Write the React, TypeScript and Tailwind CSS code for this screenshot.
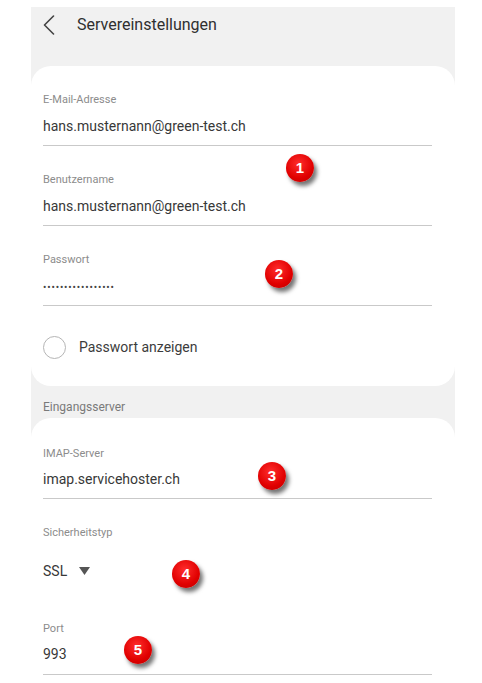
import React from "react";

const font = { fontFamily: "Roboto, 'Noto Sans', Arial, sans-serif" };

function Field({ label, value, className = "" }: { label: string; value: React.ReactNode; className?: string }) {
  return (
    <div className={className}>
      <div className="h-[14px] text-[11px] leading-[14px] text-[#8c8c8c]">{label}</div>
      <div className="mt-[8px] h-[22px] text-[14px] leading-[22px] text-[#383838]">{value}</div>
      <div className="mt-[8px] h-px bg-[#c9c9c9]" />
    </div>
  );
}

function Badge({ n, className }: { n: number; className: string }) {
  return (
    <div
      className={`absolute flex h-[28px] w-[28px] items-center justify-center rounded-full bg-[radial-gradient(circle_at_45%_35%,#ff2d2d,#e00000_60%,#b80000)] text-[15px] font-bold text-white shadow-[3px_4px_4px_rgba(0,0,0,0.55)] ${className}`}
      style={{ fontFamily: "Arial, 'Liberation Sans', sans-serif" }}
    >
      {n}
    </div>
  );
}

export default function App() {
  return (
    <div className="relative h-[683px] w-[482px] overflow-hidden bg-white" style={font}>
      <div className="ml-[31px] mt-[7px] flex h-[676px] w-[424px] flex-col bg-[#f1f1f1]">
        {/* header */}
        <div className="h-[59px]">
          <div className="flex h-[36px] items-center pl-3">
            <svg width="12" height="20" viewBox="0 0 12 20" className="mt-[-1px]">
              <path d="M10.5 1 L1.5 10 L10.5 19" fill="none" stroke="#444" strokeWidth="1.6" strokeLinecap="round" strokeLinejoin="round" />
            </svg>
            <span className="ml-[22px] text-[16px] text-[#2f2f2f]">Servereinstellungen</span>
          </div>
        </div>

        {/* account card */}
        <div className="h-[320px] rounded-[20px] bg-white pl-3 pr-[23px] pt-[27px]">
          <Field label="E-Mail-Adresse" value="hans.musternann@green-test.ch" />
          <Field className="mt-[27px]" label="Benutzername" value="hans.musternann@green-test.ch" />
          <Field
            className="mt-[27px]"
            label="Passwort"
            value={<span className="text-[10px] tracking-[0.85px] text-[#444]">•••••••••••••••••</span>}
          />
          <div className="mt-[30px] flex items-center">
            <div className="h-[23px] w-[23px] rounded-full border-[1.5px] border-[#b5b5b5]" />
            <span className="ml-[13px] text-[14px] text-[#3c3c3c]">Passwort anzeigen</span>
          </div>
        </div>

        <div className="h-[32px] pl-3 pt-[13px] text-[12px] leading-[16px] text-[#7a7a7a]">Eingangsserver</div>

        {/* server card */}
        <div className="flex-1 rounded-t-[20px] bg-white pl-3 pr-[23px] pt-[29px]">
          <div>
            <div className="h-[14px] text-[11px] leading-[14px] text-[#8c8c8c]">IMAP-Server</div>
            <div className="mt-[7px] h-[22px] text-[14px] leading-[22px] text-[#383838]">imap.servicehoster.ch</div>
            <div className="mt-[8px] h-px bg-[#c9c9c9]" />
          </div>
          <div className="mt-[27px] h-[14px] text-[11px] leading-[14px] text-[#8c8c8c]">Sicherheitstyp</div>
          <div className="mt-[20px] flex h-[22px] items-center text-[14px] leading-[22px] text-[#383838]">
            SSL
            <svg width="11" height="8" viewBox="0 0 11 8" className="ml-[12px]">
              <polygon points="0,0 11,0 5.5,8" fill="#555" />
            </svg>
          </div>
          <div className="mt-[40px]">
            <div className="h-[14px] text-[11px] leading-[14px] text-[#8c8c8c]">Port</div>
            <div className="mt-[7px] h-[22px] text-[14px] leading-[22px] text-[#383838]">993</div>
            <div className="mt-[9px] h-px bg-[#c9c9c9]" />
          </div>
        </div>
      </div>

      <Badge n={1} className="left-[286px] top-[154px]" />
      <Badge n={2} className="left-[265px] top-[260px]" />
      <Badge n={3} className="left-[258px] top-[462px]" />
      <Badge n={4} className="left-[172px] top-[560px]" />
      <Badge n={5} className="left-[124px] top-[636px]" />
    </div>
  );
}
